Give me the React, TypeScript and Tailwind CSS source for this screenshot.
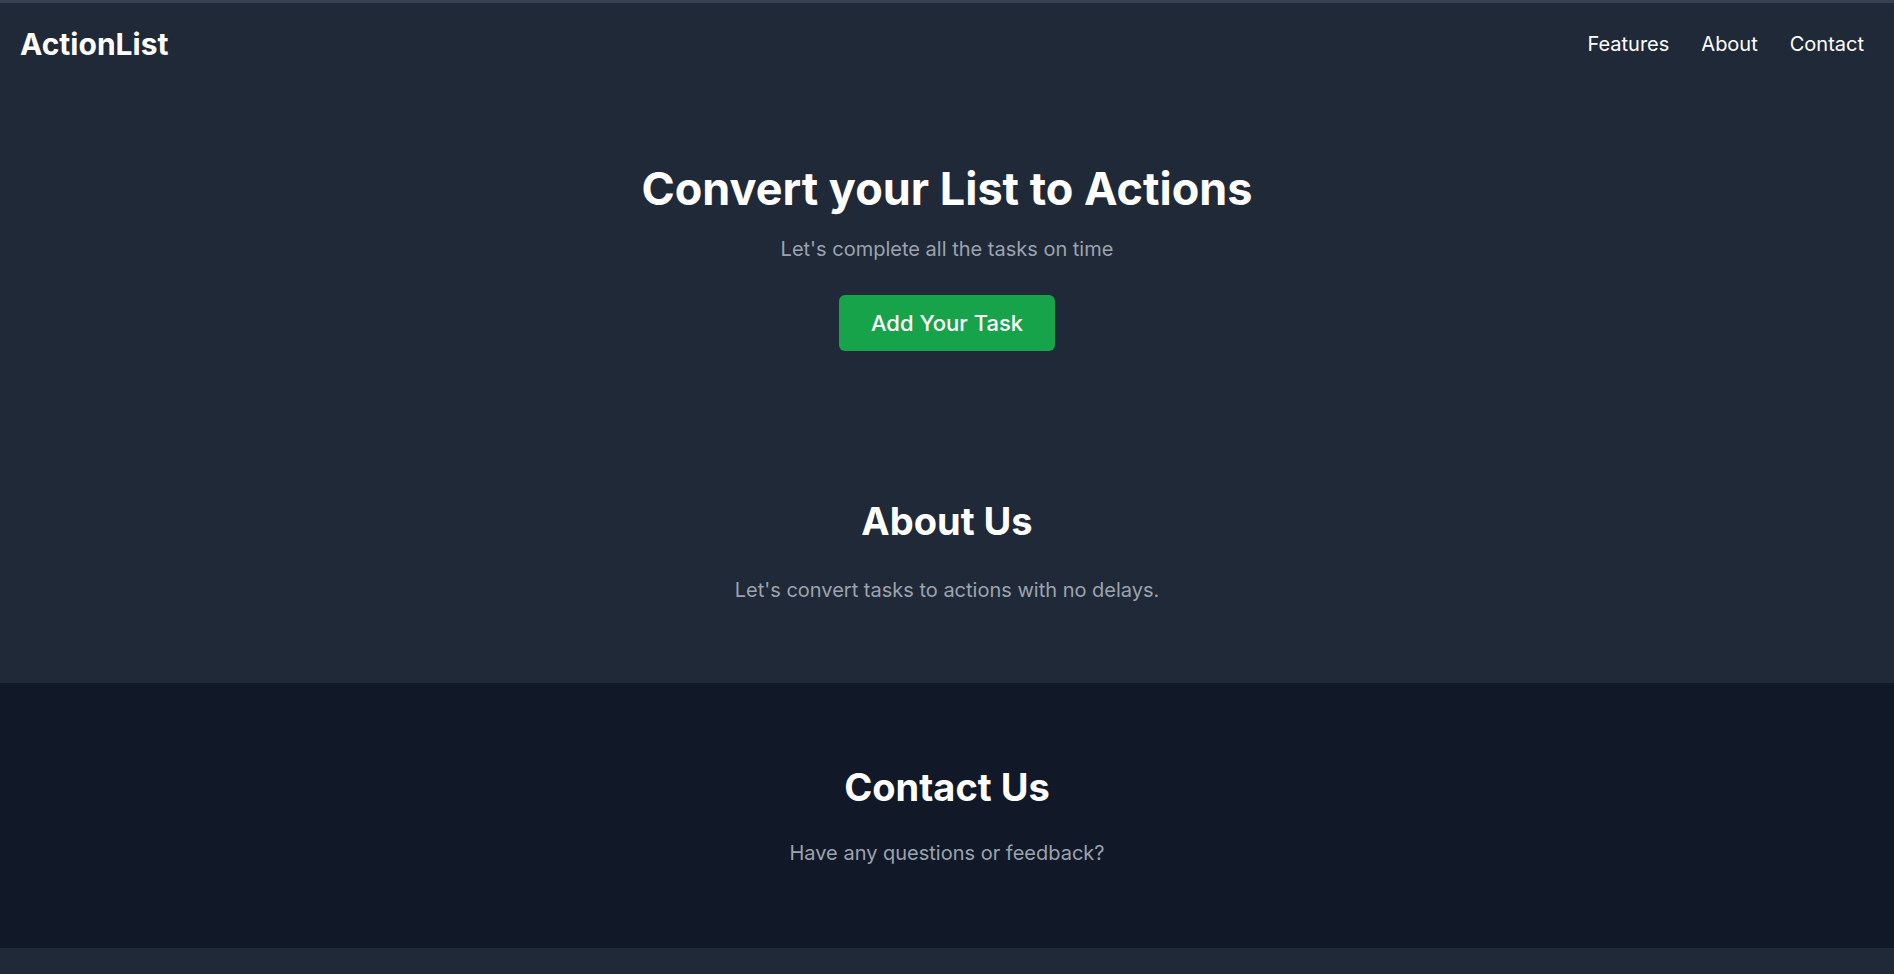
import React from 'react'

const links = ['Features', 'About', 'Contact']

const Header = () => {
  return (
    <header className="flex items-center justify-between border-t-[3px] border-[#374151] pl-5 pr-[30px] pt-[23px] pb-6">
      <div className="text-3xl font-bold text-white">ActionList</div>
      <nav className="flex items-center gap-8">
        {links.map((link) => (
          <a key={link} href={`#${link.toLowerCase()}`} className="text-xl text-white">
            {link}
          </a>
        ))}
      </nav>
    </header>
  )
}

const App = () => {
  return (
    <div
      className="min-h-screen bg-[#1f2937] text-white"
      style={{ fontFamily: 'Inter, "Noto Sans", sans-serif' }}
    >
      <Header />

      {/* hero */}
      <section className="flex flex-col items-center pt-20 pb-[70px] text-center">
        <h1 className="text-[45px] leading-none font-bold">Convert your List to Actions</h1>
        <p className="mt-6 text-xl leading-7 text-[#9ca3af]">Let's complete all the tasks on time</p>
        <button className="mt-8 rounded-md bg-[#16a34a] px-8 py-3.5 text-[22px] leading-7 font-medium text-white">
          Add Your Task
        </button>
      </section>

      <section id="about" className="pt-20 pb-[79px] text-center">
        <h2 className="mb-[35px] text-[38px] leading-10 font-bold">About Us</h2>
        <p className="text-xl leading-7 text-[#9ca3af]">Let's convert tasks to actions with no delays.</p>
      </section>

      <section id="contact" className="bg-[#111827] pt-[84px] pb-[81px] text-center">
        <h2 className="mb-8 text-[38px] leading-10 font-bold">Contact Us</h2>
        <p className="text-xl leading-7 text-[#9ca3af]">Have any questions or feedback?</p>
      </section>
    </div>
  )
}

export default App
